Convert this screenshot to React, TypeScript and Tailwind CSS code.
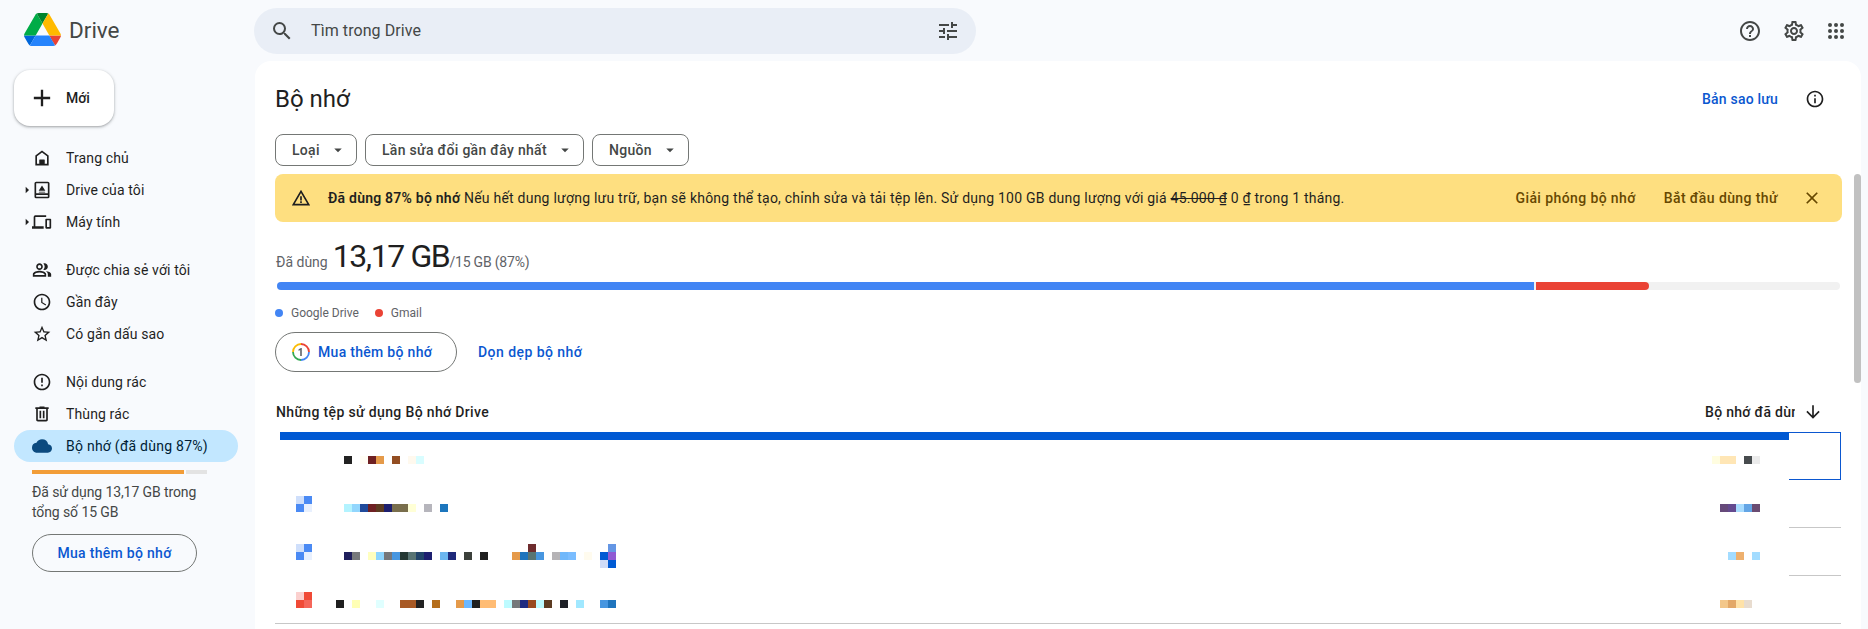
import type { ReactNode } from 'react';
import {
  MdAccessTime,
  MdAdd,
  MdArrowDownward,
  MdArrowDropDown,
  MdArrowRight,
  MdClose,
  MdCloud,
  MdErrorOutline,
  MdHelpOutline,
  MdInfoOutline,
  MdOutlinePeopleAlt,
  MdOutlineSettings,
  MdOutlineTune,
  MdSearch,
  MdStarBorder,
  MdWarningAmber,
} from 'react-icons/md';

const font = { fontFamily: 'Roboto, "Noto Sans", sans-serif' };

function DriveLogo() {
  return (
    <svg viewBox="0 0 87.3 78" className="h-[33px] w-[37px]">
      <path d="m6.6 66.85 3.85 6.65c.8 1.4 1.95 2.5 3.3 3.3l13.75-23.8h-27.5c0 1.55.4 3.1 1.2 4.5z" fill="#0066da" />
      <path d="m43.65 25-13.75-23.8c-1.35.8-2.5 1.9-3.3 3.3l-25.4 44a9.06 9.06 0 0 0 -1.2 4.5h27.5z" fill="#00ac47" />
      <path d="m73.55 76.8c1.35-.8 2.5-1.9 3.3-3.3l1.6-2.75 7.65-13.25c.8-1.4 1.2-2.95 1.2-4.5h-27.502l5.852 11.5z" fill="#ea4335" />
      <path d="m43.65 25 13.75-23.8c-1.35-.8-2.9-1.2-4.5-1.2h-18.5c-1.6 0-3.15.45-4.5 1.2z" fill="#00832d" />
      <path d="m59.8 53h-32.3l-13.75 23.8c1.35.8 2.9 1.2 4.5 1.2h50.8c1.6 0 3.15-.45 4.5-1.2z" fill="#2684fc" />
      <path d="m73.4 26.5-12.7-22c-.8-1.4-1.95-2.5-3.3-3.3l-13.75 23.8 16.15 28h27.45c0-1.55-.4-3.1-1.2-4.5z" fill="#ffba00" />
    </svg>
  );
}

function HomeIcon() {
  return (
    <svg viewBox="0 0 24 24" className="h-5 w-5" fill="currentColor">
      <path d="M12 3 4 9v12h16V9l-8-6zm6 16h-3v-5H9v5H6v-9l6-4.5 6 4.5v9z" />
      <path d="M9 14h6v5H9z" />
    </svg>
  );
}

function MyDriveIcon() {
  return (
    <svg viewBox="0 0 24 24" className="h-5 w-5" fill="currentColor">
      <path d="M19 2H5a2 2 0 0 0-2 2v16a2 2 0 0 0 2 2h14a2 2 0 0 0 2-2V4a2 2 0 0 0-2-2zm0 18H5v-2h14v2zm0-4H5V4h14v12z" />
      <path d="M12 6.5 8 13h8l-4-6.5zM8.6 14l-.6 1h8l-.6-1H8.6z" />
    </svg>
  );
}

function ComputerIcon() {
  return (
    <svg viewBox="0 0 24 24" className="h-5 w-5" fill="currentColor">
      <path d="M4 6h13V4H4a2 2 0 0 0-2 2v11H0v3h14v-3H4V6z" />
      <path d="M22 8h-5a1 1 0 0 0-1 1v10a1 1 0 0 0 1 1h5a1 1 0 0 0 1-1V9a1 1 0 0 0-1-1zm-1 10h-3v-8h3v8z" />
    </svg>
  );
}

function TrashIcon() {
  return (
    <svg viewBox="0 0 24 24" className="h-5 w-5" fill="currentColor">
      <path d="M7 21q-.825 0-1.413-.587Q5 19.825 5 19V6H4V4h5V3h6v1h5v2h-1v13q0 .825-.587 1.413Q17.825 21 17 21H7ZM17 6H7v13h10V6ZM9 17h2V8H9v9Zm4 0h2V8h-2v9Z" />
    </svg>
  );
}

function AppsIcon() {
  return (
    <svg viewBox="0 0 18 18" className="h-[18px] w-[18px]" fill="currentColor">
      {[3, 9, 15].map((y) =>
        [3, 9, 15].map((x) => <circle key={`${x}-${y}`} cx={x} cy={y} r="2" />)
      )}
    </svg>
  );
}

function GoogleOneIcon() {
  return (
    <svg viewBox="0 0 20 20" className="h-5 w-5" fill="none" strokeWidth="1.8">
      <path d="M10 2a8 8 0 0 1 8 8" stroke="#ea4335" />
      <path d="M18 10a8 8 0 0 1-8 8" stroke="#4285f4" />
      <path d="M10 18a8 8 0 0 1-8-8" stroke="#34a853" />
      <path d="M2 10a8 8 0 0 1 8-8" stroke="#fbbc04" />
      <path d="M10.8 6v8H9.2V8l-1.6.9V7.2L10 6h.8z" fill="#5f6368" stroke="none" />
    </svg>
  );
}

function NavItem({ icon, label, arrow, active }: { icon: ReactNode; label: string; arrow?: boolean; active?: boolean }) {
  return (
    <div
      className={`relative flex h-8 w-[224px] items-center rounded-2xl pl-[18px] text-sm ${
        active ? 'bg-[#c2e7ff] tracking-[0.25px] text-[#001d35]' : 'tracking-[0.12px] text-[#1f1f1f]'
      }`}
    >
      {arrow && <MdArrowRight className="absolute left-[5px] text-[16px] text-[#1f1f1f]" />}
      <span className={`flex w-[34px] shrink-0 items-center text-[20px] ${active ? 'text-[#0b4a7f]' : ''}`}>{icon}</span>
      {label}
    </div>
  );
}

function Sidebar() {
  return (
    <aside className="flex w-[255px] shrink-0 flex-col">
      <div className="flex h-[61px] items-center pb-[3px] pl-6">
        <DriveLogo />
        <span className="ml-2 mt-1 text-[22.5px] text-[#444746]">Drive</span>
      </div>
      <div className="ml-[14px] mt-[9px] flex h-14 w-[100px] items-center rounded-2xl bg-white pl-[14px] text-sm font-medium text-[#1f1f1f] shadow-[0_1px_2px_rgba(60,64,67,0.3),0_1px_3px_1px_rgba(60,64,67,0.15)]">
        <MdAdd className="mr-[10px] text-[28px]" />
        Mới
      </div>
      <nav className="ml-[14px] mt-4 flex flex-col">
        <NavItem icon={<HomeIcon />} label="Trang chủ" />
        <NavItem icon={<MyDriveIcon />} label="Drive của tôi" arrow />
        <NavItem icon={<ComputerIcon />} label="Máy tính" arrow />
        <div className="h-4" />
        <NavItem icon={<MdOutlinePeopleAlt />} label="Được chia sẻ với tôi" />
        <NavItem icon={<MdAccessTime />} label="Gần đây" />
        <NavItem icon={<MdStarBorder />} label="Có gắn dấu sao" />
        <div className="h-4" />
        <NavItem icon={<MdErrorOutline />} label="Nội dung rác" />
        <NavItem icon={<TrashIcon />} label="Thùng rác" />
        <NavItem icon={<MdCloud />} label="Bộ nhớ (đã dùng 87%)" active />
      </nav>
      <div className="ml-8 mt-2 flex h-1 w-[175px] gap-0.5">
        <div className="w-[152px] bg-[#f29d38]" />
        <div className="flex-1 bg-[#e3e3e3]" />
      </div>
      <p className="ml-8 mt-2 w-[180px] text-sm leading-5 tracking-[-0.1px] text-[#444746]">Đã sử dụng 13,17 GB trong tổng số 15 GB</p>
      <button className="ml-8 mt-3 h-[38px] w-[165px] rounded-full border border-[#747775] text-sm font-medium tracking-[0.3px] text-[#0b57d0]">
        Mua thêm bộ nhớ
      </button>
    </aside>
  );
}

function Header() {
  return (
    <header className="flex h-[61px] items-center">
      <div className="-ml-px flex h-[46px] w-[722px] items-center rounded-full bg-[#e9eef6] pl-4 pr-4 text-base text-[#444746]">
        <MdSearch className="text-[24px] text-[#444746]" />
        <span className="ml-[17px] flex-1 tracking-[0.08px]">Tìm trong Drive</span>
        <MdOutlineTune className="text-[24px]" />
      </div>
      <div className="ml-auto flex items-center pr-[23px] text-[#444746]">
        <MdHelpOutline className="text-[24px]" />
        <MdOutlineSettings className="ml-5 text-[24px]" />
        <div className="ml-[21px]">
          <AppsIcon />
        </div>
      </div>
    </header>
  );
}

function Chip({ label, width }: { label: string; width: string }) {
  return (
    <div className={`flex h-8 items-center justify-between rounded-lg border border-[#747775] pl-4 pr-[9px] text-sm font-medium tracking-[0.3px] text-[#444746] ${width}`}>
      {label}
      <MdArrowDropDown className="text-[18px]" />
    </div>
  );
}

function Banner() {
  return (
    <div className="mt-2 flex h-12 items-center rounded-lg bg-[#fedf80] pl-4 pr-5 text-sm text-[#1f1f1f]">
      <MdWarningAmber className="mr-[17px] text-[20px]" />
      <span className="tracking-[0.23px]">
        <b className="font-semibold">Đã dùng 87% bộ nhớ</b> Nếu hết dung lượng lưu trữ, bạn sẽ không thể tạo, chỉnh sửa và tải tệp lên. Sử dụng 100 GB dung lượng với giá <s>45.000 ₫</s> 0 ₫ trong 1 tháng.
      </span>
      <span className="ml-auto font-medium tracking-[0.4px] text-[#674800]">Giải phóng bộ nhớ</span>
      <span className="ml-7 font-medium tracking-[0.4px] text-[#674800]">Bắt đầu dùng thử</span>
      <MdClose className="ml-6 text-[20px] text-[#674800]" />
    </div>
  );
}

function Usage() {
  return (
    <section>
      <div className="mt-[12px] flex h-[44px] items-baseline pl-px text-sm text-[#5f6368]">
        Đã dùng
        <span className="ml-[5px] text-[32px] leading-[44px] tracking-[-1.4px] text-[#1f1f1f]">13,17 GB</span>
        <span className="tracking-[-0.2px]">/15 GB (87%)</span>
      </div>
      <div className="ml-0.5 mt-[4px] flex h-2 w-[1563px] gap-0.5 overflow-hidden rounded-full bg-[#f1f1f1]">
        <div className="w-[1257px] bg-[#4285f4]" />
        <div className="w-[113px] rounded-r-full bg-[#ea4335]" />
      </div>
      <div className="mt-[15px] flex h-4 items-center text-xs text-[#5f6368]">
        <span className="h-2 w-2 rounded-full bg-[#4285f4]" />
        <span className="ml-2">Google Drive</span>
        <span className="ml-4 h-2 w-2 rounded-full bg-[#ea4335]" />
        <span className="ml-2">Gmail</span>
      </div>
      <div className="mt-[11px] flex items-center text-sm font-medium tracking-[0.3px] text-[#0b57d0]">
        <button className="flex h-10 w-[182px] items-center rounded-full border border-[#747775] pl-[15px]">
          <GoogleOneIcon />
          <span className="ml-[7px]">Mua thêm bộ nhớ</span>
        </button>
        <span className="ml-[21px] tracking-[0.45px]">Dọn dẹp bộ nhớ</span>
      </div>
    </section>
  );
}

// pixelated file names, every cell is 8x8, '' means blank
const _ = '';
const names: { icon?: string[]; start: string; top: string; lines: string[][]; size: string[] }[] = [
  {
    start: 'ml-[48px]',
    top: 'mt-2',
    lines: [['#222222', _, '#fffdf5', '#6e2023', '#e59a4a', _, '#934e22', _, '#fff9ee', '#d9fdff']],
    size: ['#fffde0', '#ffe6b5', '#ffe6b5', _, '#474c4e', '#ebebeb'],
  },
  {
    icon: ['#cfdffb', '#4a8af4', '#4a8af4', '#e8f0fe'],
    start: 'ml-8',
    top: 'mt-2',
    lines: [['#b3f3ff', '#92d6fd', '#204a9b', '#6e2023', '#5c3b20', '#1e1f6e', '#796e4c', '#796e4c', '#ffffd6', _, '#b6b5bc', _, '#1c76bd']],
    size: ['#664a7a', '#644a8f', '#a8dcff', '#63a5e5', '#6a4c72'],
  },
  {
    icon: ['#cfdffb', '#4a8af4', '#4a8af4', '#e8f0fe'],
    start: 'ml-8',
    top: 'mt-0',
    lines: [
      [_, _, _, _, _, _, _, _, _, _, _, _, _, _, _, _, _, _, _, _, _, _, _, '#6e2c2e', _, _, _, _, _, _, _, _, _, '#6496e4'],
      ['#1f1f5c', '#77797b', _, '#ffffbf', '#8dd5ff', '#75777b', '#4796e0', '#243733', '#587473', '#22456a', '#1d1f70', _, '#6cb6ef', '#1f2a7b', _, '#3c403b', _, '#1f1f1f', _, _, _, '#e59a4a', '#1f74bd', '#587473', '#4796e0', _, '#b5b3b6', '#70b8fb', '#7abdff', _, '#fffbee', _, '#005ad3', '#8f5ad3'],
      [_, _, _, _, _, _, _, _, _, _, _, _, _, _, _, _, _, _, _, _, _, _, _, _, _, _, _, _, _, _, _, _, '#d0dcf7', '#005ad3'],
    ],
    size: ['#a3dcff', '#eeb06e', _, '#a3dcff'],
  },
  {
    icon: ['#fbd0ce', '#f04a36', '#f04a36', '#f5665a'],
    start: 'ml-6',
    top: 'mt-2',
    lines: [['#1f1f1f', _, '#ffffb5', _, _, '#e0ffff', _, _, '#a85a26', '#a85a26', '#222222', _, '#b56e1c', _, _, '#e59a4a', '#6cb8ff', '#1f1f1f', '#ffbc74', '#ffbc74', _, '#bdfbff', '#75787a', '#1e2a80', '#984a1f', '#bdfbff', '#5c3c22', _, '#1e2027', _, '#a1e8ff', _, _, '#4796e0', '#1f74bd']],
    size: ['#f3c78a', '#e3a868', '#ffe2a8', '#e8dccf', _],
  },
];

function Cells({ cells }: { cells: string[] }) {
  return (
    <div className="flex">
      {cells.map((c, i) => (
        <div key={i} className="h-2 w-2" style={{ backgroundColor: c || 'transparent' }} />
      ))}
    </div>
  );
}

function FileRow({ row, index }: { row: (typeof names)[number]; index: number }) {
  const selected = index === 0;
  const last = index === names.length - 1;
  return (
    <div className={`flex h-12 ${last ? 'border-b border-[#c7c7c7]' : ''}`}>
      <div className="relative flex min-w-0 flex-1 items-start pl-[21px] pt-4">
        {selected && <div className="absolute left-[5px] right-0 top-0 h-2 bg-[#0059d3]" />}
        {row.icon ? (
          <div className="grid h-4 w-4 shrink-0 grid-cols-2">
            {row.icon.map((c, i) => <div key={i} style={{ backgroundColor: c }} />)}
          </div>
        ) : null}
        <div className={`flex flex-col ${row.start} ${row.top}`}>
          {row.lines.map((l, i) => <Cells key={i} cells={l} />)}
        </div>
        <div className="ml-auto mr-[29px] mt-2">
          <Cells cells={row.size} />
        </div>
      </div>
      <div
        className={`w-[52px] shrink-0 ${selected ? 'border-y border-r border-[#0b57d0]' : ''} ${!selected && !last ? 'border-b border-[#c7c7c7]' : ''}`}
      />
    </div>
  );
}

function FileTable() {
  return (
    <section className="mr-px mt-[18px]">
      <div className="flex h-[42px] items-center pl-px pt-0.5 text-sm font-medium tracking-[0.35px] text-[#1f1f1f]">
        Những tệp sử dụng Bộ nhớ Drive
        <div className="ml-auto w-[90px] overflow-hidden whitespace-nowrap tracking-[0.3px]">Bộ nhớ đã dùng</div>
        <div className="w-[46px] pl-2 text-[20px]">
          <MdArrowDownward />
        </div>
      </div>
      {names.map((r, i) => <FileRow key={i} row={r} index={i} />)}
    </section>
  );
}

export default function App() {
  return (
    <div className="flex h-[629px] overflow-hidden bg-[#f8fafd]" style={font}>
      <Sidebar />
      <div className="flex min-w-0 flex-1 flex-col">
        <Header />
        <main className="relative mr-[7px] flex-1 overflow-hidden rounded-t-2xl bg-white pl-5 pr-[19px]">
          <div className="flex h-[73px] items-center pt-[2px]">
            <h1 className="text-[24px] text-[#1f1f1f]">Bộ nhớ</h1>
            <span className="ml-auto text-sm font-medium tracking-[0.2px] text-[#0b57d0]">Bản sao lưu</span>
            <MdInfoOutline className="ml-[27px] mr-[17px] text-[20px] text-[#1f1f1f]" />
          </div>
          <div className="flex gap-2">
            <Chip label="Loại" width="w-[82px]" />
            <Chip label="Lần sửa đổi gần đây nhất" width="w-[219px]" />
            <Chip label="Nguồn" width="w-[97px]" />
          </div>
          <Banner />
          <Usage />
          <FileTable />
          {/* scrollbar thumb */}
          <div className="absolute right-0 top-[113px] h-[209px] w-[7px] rounded-full bg-[#c1c1c1]" />
        </main>
      </div>
    </div>
  );
}
